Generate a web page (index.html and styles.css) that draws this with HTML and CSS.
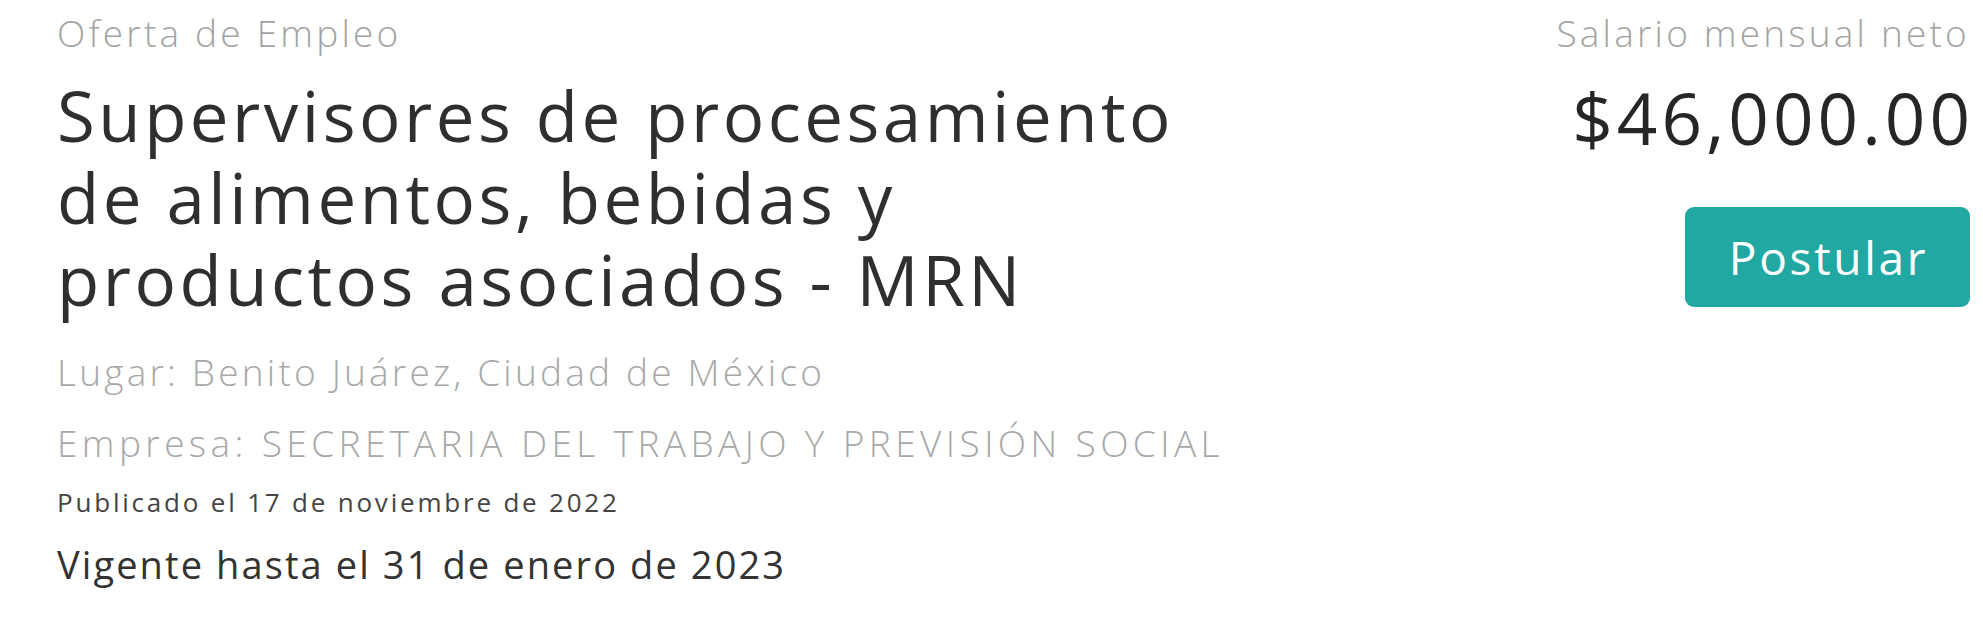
FILE: index.html
```html
<!DOCTYPE html>
<html lang="es">
<head>
<meta charset="utf-8">
<title>Oferta de Empleo</title>
<link rel="stylesheet" href="styles.css">
</head>
<body>
<div class="offer">
  <div class="offer-main">
    <div class="eyebrow">Oferta de Empleo</div>
    <h1 class="title">Supervisores de procesamiento de alimentos, bebidas y productos asociados - MRN</h1>
    <div class="meta">Lugar: Benito Juárez, Ciudad de México</div>
    <div class="meta meta-company">Empresa: SECRETARIA DEL TRABAJO Y PREVISIÓN SOCIAL</div>
    <div class="published">Publicado el 17 de noviembre de 2022</div>
    <div class="valid">Vigente hasta el 31 de enero de 2023</div>
  </div>
  <div class="offer-side">
    <div class="eyebrow eyebrow-right">Salario mensual neto</div>
    <div class="salary">$46,000.00</div>
    <button class="apply" type="button">Postular</button>
  </div>
</div>
</body>
</html>
```

FILE: styles.css
```css
html, body {
  margin: 0;
  padding: 0;
  background: #ffffff;
}

body {
  font-family: "Open Sans", "Liberation Sans", sans-serif;
  color: #333333;
}

.offer {
  display: flex;
  justify-content: space-between;
  align-items: flex-start;
  padding: 0 16px 0 57px;
}

.offer-main {
  display: flex;
  flex-direction: column;
}

.eyebrow {
  font-size: 37px;
  font-weight: 300;
  color: #a3a3a3;
  line-height: 52px;
  margin-top: 7px;
  letter-spacing: 3.2px;
}

.eyebrow-right {
  margin-right: -3px;
}

.title {
  margin: 15px 0 0 0;
  max-width: 1170px;
  font-size: 69px;
  font-weight: 400;
  line-height: 82px;
  color: #2f2f2f;
  letter-spacing: 3.5px;
}

.meta {
  font-size: 37px;
  font-weight: 300;
  color: #a8a8a8;
  line-height: 52px;
  margin-top: 26px;
  letter-spacing: 3.2px;
}

.meta-company {
  margin-top: 19px;
  letter-spacing: 4.4px;
}

.published {
  font-size: 26px;
  font-weight: 400;
  color: #444444;
  line-height: 40px;
  margin-top: 13px;
  letter-spacing: 2.8px;
}

.valid {
  font-size: 38px;
  font-weight: 400;
  color: #333333;
  line-height: 52px;
  margin-top: 16px;
  letter-spacing: 2.1px;
}

.offer-side {
  display: flex;
  flex-direction: column;
  align-items: flex-end;
}

.salary {
  font-size: 71px;
  font-weight: 400;
  color: #262626;
  line-height: 82px;
  margin-top: 18px;
  margin-right: -7px;
  letter-spacing: 4px;
}

.apply {
  margin-top: 48px;
  width: 285px;
  height: 100px;
  border: none;
  border-radius: 9px;
  background: #22a8a3;
  color: #ffffff;
  font-family: "Open Sans", "Liberation Sans", sans-serif;
  font-size: 46px;
  font-weight: 400;
  letter-spacing: 2.7px;
  padding: 0 0 0 2px;
  margin-right: -3px;
}
```
